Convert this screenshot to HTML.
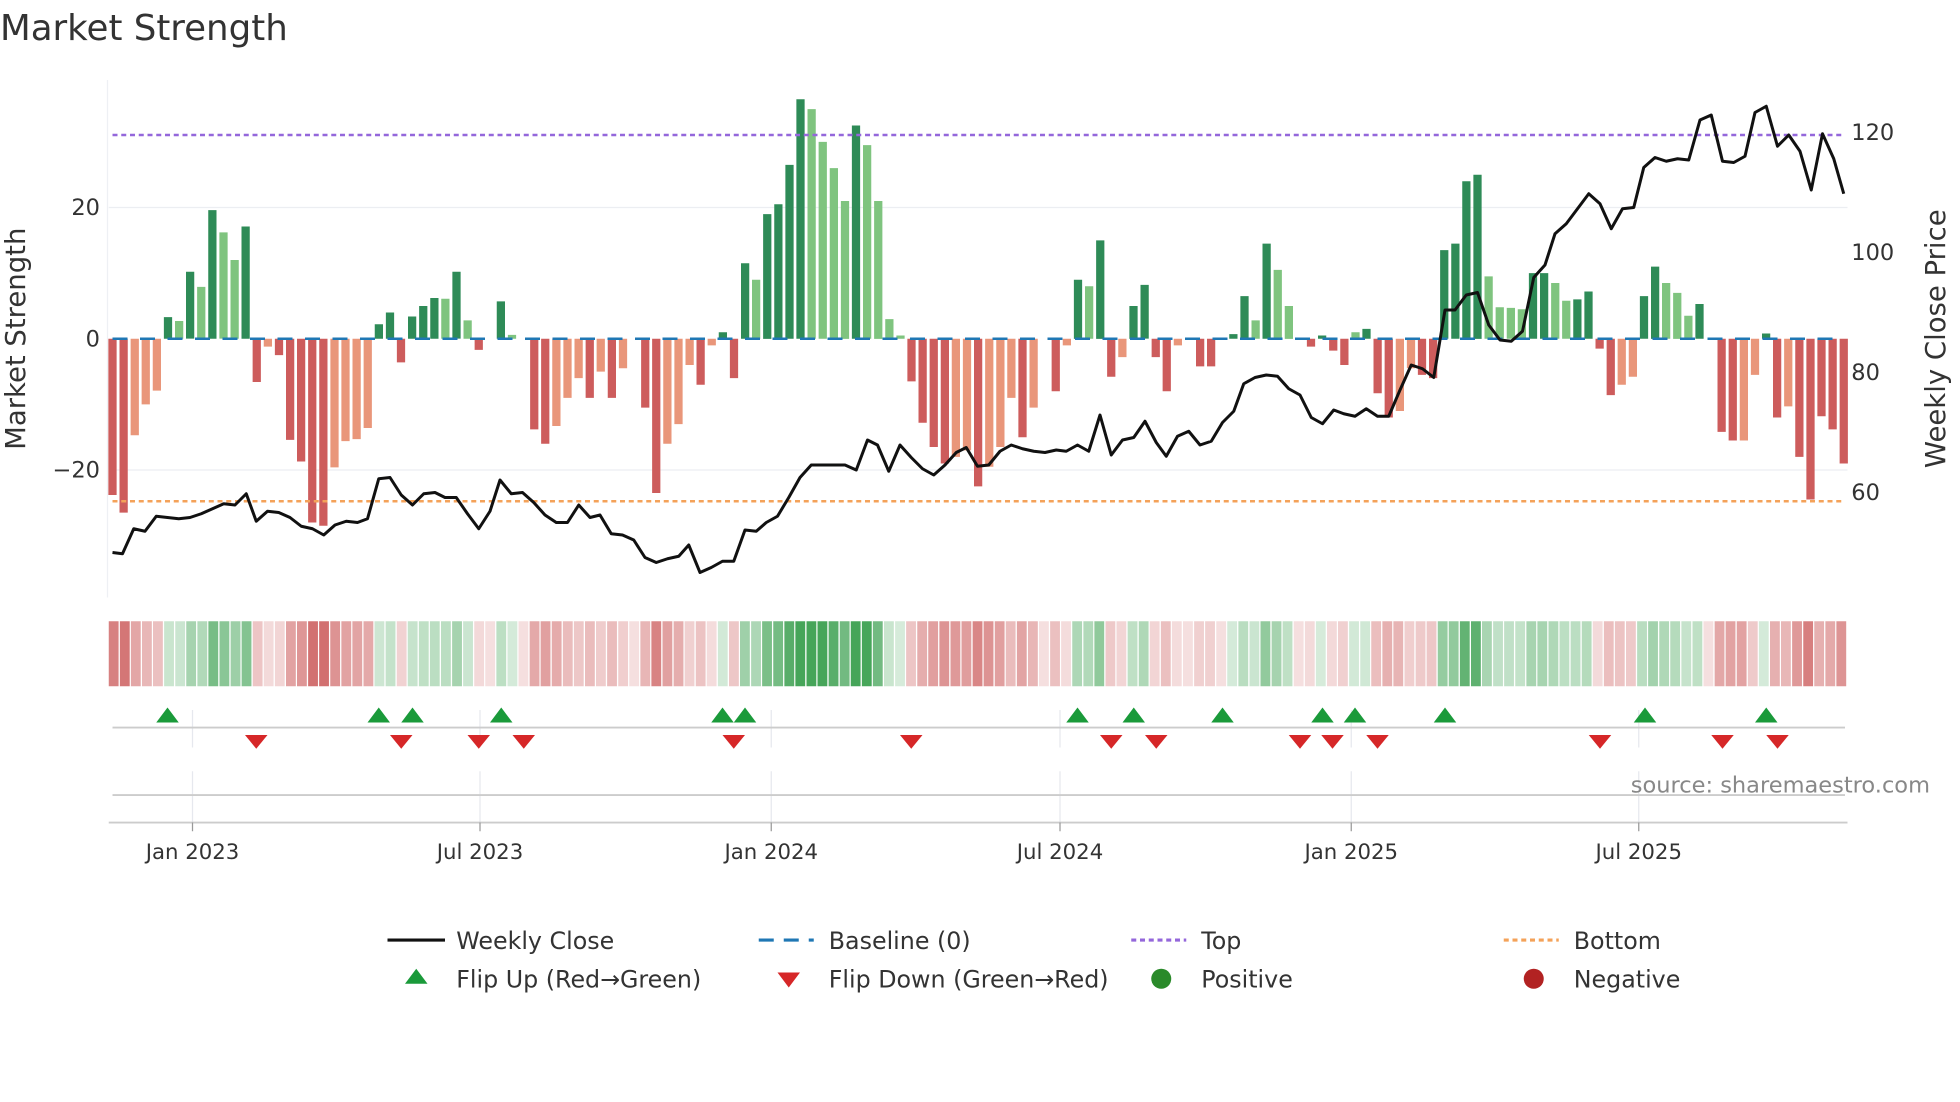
<!DOCTYPE html>
<html><head><meta charset="utf-8"><style>
html,body{margin:0;padding:0;background:#fff;width:1960px;height:1102px;overflow:hidden}
svg{display:block}
text{font-family:"DejaVu Sans","Liberation Sans",sans-serif;fill:#333}
</style></head><body>
<svg id="s" width="1960" height="1102" viewBox="0 0 1568 881.6" xmlns="http://www.w3.org/2000/svg">
<text x="0" y="32" font-size="28.5">Market Strength</text>
<line x1="86" y1="64" x2="86" y2="478" stroke="#eef0f4" stroke-width="1"/>
<line x1="87" y1="166" x2="1478" y2="166" stroke="#eceef2" stroke-width="1"/>
<line x1="87" y1="376" x2="1478" y2="376" stroke="#eceef2" stroke-width="1"/>
<g id="bars"></g>
<line x1="90" y1="271" x2="1476" y2="271" stroke="#1f77b4" stroke-width="2" stroke-dasharray="12,10"/>
<line x1="90" y1="108" x2="1476" y2="108" stroke="#9467db" stroke-width="2" stroke-dasharray="4,3"/>
<line x1="90" y1="401" x2="1476" y2="401" stroke="#f4a259" stroke-width="2" stroke-dasharray="4,3"/>
<polyline id="price" fill="none" stroke="#111" stroke-width="2.4" stroke-linejoin="round"/>
<text x="80" y="172" font-size="18" text-anchor="end">20</text>
<text x="80" y="277" font-size="18" text-anchor="end">0</text>
<text x="80" y="382" font-size="18" text-anchor="end">−20</text>
<text x="1481" y="112" font-size="18">120</text>
<text x="1481" y="208" font-size="18">100</text>
<text x="1481" y="304" font-size="18">80</text>
<text x="1481" y="400" font-size="18">60</text>
<text transform="translate(20,271) rotate(-90)" font-size="22" text-anchor="middle">Market Strength</text>
<text transform="translate(1556,271) rotate(-90)" font-size="22" text-anchor="middle">Weekly Close Price</text>
<g id="heat"></g>
<g stroke="#e6e8ee" stroke-width="1">
<line x1="154" y1="568" x2="154" y2="598"/><line x1="384" y1="568" x2="384" y2="598"/><line x1="617" y1="568" x2="617" y2="598"/><line x1="848" y1="568" x2="848" y2="598"/><line x1="1081" y1="568" x2="1081" y2="598"/><line x1="1311" y1="568" x2="1311" y2="598"/>
<line x1="154" y1="617" x2="154" y2="658"/><line x1="384" y1="617" x2="384" y2="658"/><line x1="617" y1="617" x2="617" y2="658"/><line x1="848" y1="617" x2="848" y2="658"/><line x1="1081" y1="617" x2="1081" y2="658"/><line x1="1311" y1="617" x2="1311" y2="658"/>
</g>
<line x1="90" y1="582" x2="1476" y2="582" stroke="#ccc" stroke-width="1.5"/>
<line x1="90" y1="636" x2="1476" y2="636" stroke="#ccc" stroke-width="1.5"/>
<line x1="87" y1="658" x2="1478" y2="658" stroke="#ccc" stroke-width="1.5"/>
<g stroke="#999" stroke-width="1"><line x1="154" y1="658" x2="154" y2="665"/><line x1="384" y1="658" x2="384" y2="665"/><line x1="617" y1="658" x2="617" y2="665"/><line x1="848" y1="658" x2="848" y2="665"/><line x1="1081" y1="658" x2="1081" y2="665"/><line x1="1311" y1="658" x2="1311" y2="665"/></g>
<g id="flips"></g>
<g font-size="17" text-anchor="middle">
<text x="154" y="687">Jan 2023</text><text x="384" y="687">Jul 2023</text><text x="617" y="687">Jan 2024</text><text x="848" y="687">Jul 2024</text><text x="1081" y="687">Jan 2025</text><text x="1311" y="687">Jul 2025</text>
</g>
<text x="1544" y="634" font-size="18" text-anchor="end" style="fill:#888">source: sharemaestro.com</text>
<g font-size="19">
<line x1="310" y1="752" x2="356" y2="752" stroke="#111" stroke-width="2.5"/><text x="365" y="759">Weekly Close</text>
<line x1="607" y1="752" x2="651" y2="752" stroke="#1f77b4" stroke-width="2.5" stroke-dasharray="12,8"/><text x="663" y="759">Baseline (0)</text>
<line x1="905" y1="752" x2="949" y2="752" stroke="#9467db" stroke-width="2.5" stroke-dasharray="4,3"/><text x="961" y="759">Top</text>
<line x1="1203" y1="752" x2="1247" y2="752" stroke="#f4a259" stroke-width="2.5" stroke-dasharray="4,3"/><text x="1259" y="759">Bottom</text>
<path d="M324,787 L333,775 L342,787Z" fill="#1a9a3a"/><text x="365" y="790">Flip Up (Red→Green)</text>
<path d="M622,778 L640,778 L631,790Z" fill="#d62728"/><text x="663" y="790">Flip Down (Green→Red)</text>
<circle cx="929" cy="783" r="8" fill="#2a8a2a"/><text x="961" y="790">Positive</text>
<circle cx="1227" cy="783" r="8" fill="#b22222"/><text x="1259" y="790">Negative</text>
</g>
</svg>
<script>
var NS="http://www.w3.org/2000/svg";
function el(t,a,p){var e=document.createElementNS(NS,t);for(var k in a)e.setAttribute(k,a[k]);p.appendChild(e);return e;}
var V="-23.8r -26.5r -14.7s -10s -7.9s 3.3d 2.7l 10.2d 7.9l 19.6d 16.2l 12l 17.1d -6.6r -1.2s -2.5r -15.4r -18.7r -28r -28.5r -19.6s -15.6s -15.3s -13.6s 2.2d 4d -3.6r 3.4d 5d 6.2d 6.1l 10.2d 2.8l -1.7r 0z 5.7d 0.6l 0z -13.8r -16r -13.3s -9s -6s -9r -5s -9r -4.5s 0z -10.5r -23.5r -16s -13s -4s -7r -1s 1d -6r 11.5d 9l 19d 20.5d 26.5d 36.5d 35l 30l 26l 21l 32.5d 29.5l 21l 3l 0.5l -6.5r -12.8r -16.5r -19r -18s -17s -22.5r -19.5s -16.5s -9s -15r -10.5s 0z -8r -1s 9d 8l 15d -5.8r -2.8s 5d 8.2d -2.8r -8r -1s 0z -4.2r -4.2r 0z 0.7d 6.5d 2.8l 14.5d 10.5l 5l 0z -1.2r 0.5d -1.8r -4r 1l 1.5d -8.3r -12r -11s -4.5s -5.5r -6r 13.5d 14.5d 24d 25d 9.5l 4.8l 4.7l 4.5l 10d 10d 8.5l 5.8l 6d 7.2d -1.5r -8.6r -7s -5.8s 6.5d 11d 8.5l 7l 3.5l 5.3d 0z -14.2r -15.5r -15.5s -5.5s 0.8d -12r -10.3s -18r -24.5r -11.8r -13.8r -19r".split(" ");
var C={d:"#2e8b57",l:"#7fc47f",r:"#cd5c5c",s:"#e9967a",z:"#fff"};
var bars=document.getElementById("bars"),heat=document.getElementById("heat");
var n=V.length,step=(1475-90)/(n-1);
V.forEach(function(s,i){
 var v=parseFloat(s),t=s.slice(-1),x=90+i*step;
 if(v!==0){var h=Math.abs(v)*5.25;el("rect",{x:(x-3.3).toFixed(1),y:(v>0?271-h:271).toFixed(1),width:6.6,height:h.toFixed(1),fill:C[t]},bars);}
 var a=Math.min(1,Math.abs(v)/30)*0.75+0.2,col;
 if(v>0)col="rgba(60,160,80,"+a.toFixed(2)+")";else col="rgba(200,80,80,"+(a*0.9).toFixed(2)+")";
 el("rect",{x:(87+i*(1391/n)).toFixed(1),y:497,width:(1391/n-1).toFixed(2),height:52,fill:col},heat);
});
var P="90,442 98,443 107,423 116,425 125,413 134,414 143,415 152,414 161,411 170,407 179,403 188,404 197,395 205,417 214,409 223,410 232,414 241,421 250,423 259,428 268,420 277,417 286,418 294,415 303,383 312,382 321,396 330,404 339,395 348,394 356,398 365,398 374,411 383,423 392,409 400,384 409,395 418,394 427,402 436,412 445,418 454,418 463,404 472,414 480,412 489,427 498,428 507,432 516,446 525,450 534,447 543,445 551,436 560,458 569,454 578,449 587,449 596,424 605,425 613,418 622,413 631,398 640,382 649,372 658,372 667,372 676,372 685,376 694,352 702,356 711,377 720,356 729,366 738,375 747,380 756,372 765,362 773,358 782,373 791,372 800,361 809,356 818,359 827,361 836,362 845,360 853,361 862,356 871,361 880,332 889,364 898,352 907,350 916,337 925,354 933,365 942,349 951,345 960,356 969,353 978,338 987,329 995,307 1004,302 1013,300 1022,301 1031,311 1040,316 1049,334 1058,339 1067,328 1075,331 1084,333 1093,327 1102,333 1111,333 1120,312 1129,292 1138,295 1147,302 1156,248 1164,248 1173,236 1182,234 1191,260 1200,272 1209,273 1218,265 1227,222 1236,212 1244,187 1253,179 1262,167 1271,155 1280,163 1289,183 1298,167 1307,166 1315,134 1324,126 1333,129 1342,127 1351,128 1360,96 1369,92 1378,129 1387,130 1396,125 1404,90 1413,85 1422,117 1431,108 1440,121 1449,152 1458,107 1467,127 1475,155";
document.getElementById("price").setAttribute("points",P);
var f=document.getElementById("flips");
[134,303,330,401,578,596,862,907,978,1058,1084,1156,1316,1413].forEach(function(x){el("path",{d:"M"+(x-9)+",578 L"+x+",566 L"+(x+9)+",578Z",fill:"#1a9a3a"},f);});
[205,321,383,419,587,729,889,925,1040,1066,1102,1280,1378,1422].forEach(function(x){el("path",{d:"M"+(x-9)+",588 L"+(x+9)+",588 L"+x+",599Z",fill:"#d62728"},f);});
</script>
</body></html>
